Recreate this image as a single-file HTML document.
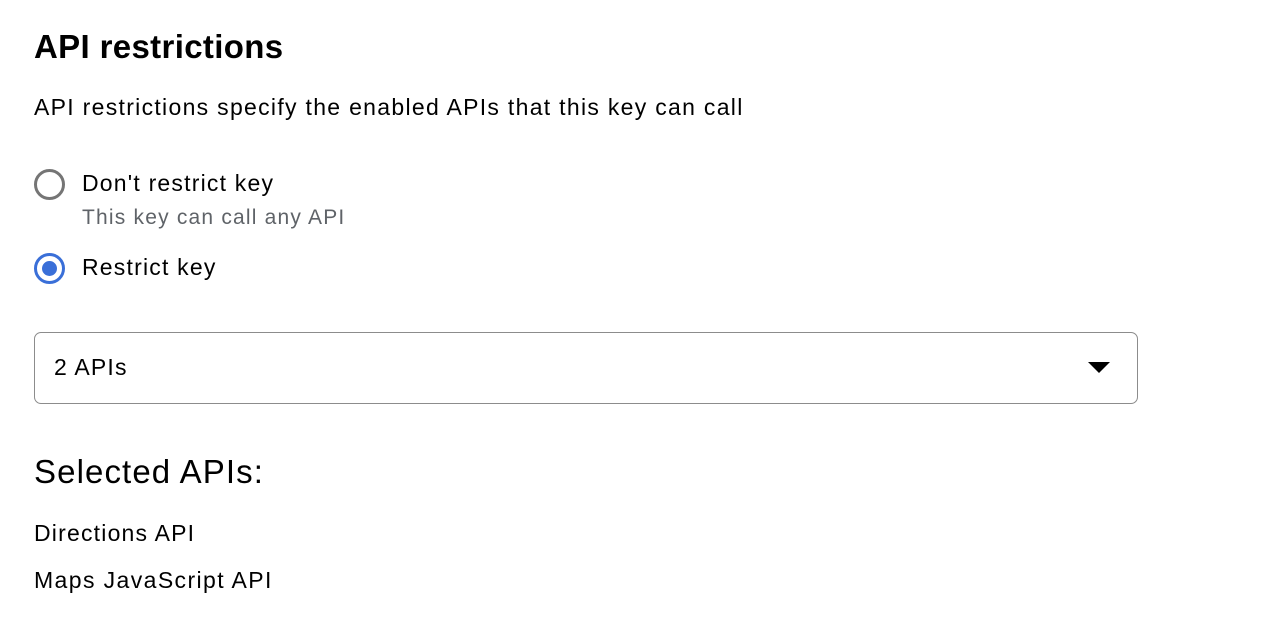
<!DOCTYPE html>
<html><head><style>
body{margin:0;width:1268px;height:630px;background:#fff;font-family:"Liberation Sans",Arial,sans-serif;color:#202124;position:relative;overflow:hidden}
.a{position:absolute;white-space:nowrap;letter-spacing:1.2px}
.radio{position:absolute;width:31px;height:31px;border-radius:50%;box-sizing:border-box}
</style></head><body>
<div class="a" style="left:34px;top:28px;font-size:33px;font-weight:600;color:#000;letter-spacing:0.35px">API restrictions</div>
<div class="a" style="left:34px;top:94px;font-size:23px;color:#000;letter-spacing:1.3px">API restrictions specify the enabled APIs that this key can call</div>
<div class="radio" style="left:34px;top:169px;border:3px solid #757575"></div>
<div class="a" style="left:82px;top:170px;font-size:23px;color:#000">Don't restrict key</div>
<div class="a" style="left:82px;top:206px;font-size:21px;color:#5f6368">This key can call any API</div>
<div class="radio" style="left:34px;top:253px;border:3px solid #3a6fd8"><div style="position:absolute;left:5px;top:5px;width:15px;height:15px;border-radius:50%;background:#3a6fd8"></div></div>
<div class="a" style="left:82px;top:254px;font-size:23px;color:#000">Restrict key</div>
<div style="position:absolute;left:34px;top:332px;width:1104px;height:72px;box-sizing:border-box;border:1.5px solid #8c8c8c;border-radius:7px"></div>
<div class="a" style="left:54px;top:354px;font-size:23px;color:#000">2 APIs</div>
<svg class="a" style="left:1088px;top:362px" width="22" height="12"><path d="M0 0H22L11 11Z" fill="#000"/></svg>
<div class="a" style="left:34px;top:453px;font-size:33px;color:#000;letter-spacing:1.1px">Selected APIs:</div>
<div class="a" style="left:34px;top:520px;font-size:23px;color:#000">Directions API</div>
<div class="a" style="left:34px;top:567px;font-size:23px;color:#000;letter-spacing:1.4px">Maps JavaScript API</div>
</body></html>
